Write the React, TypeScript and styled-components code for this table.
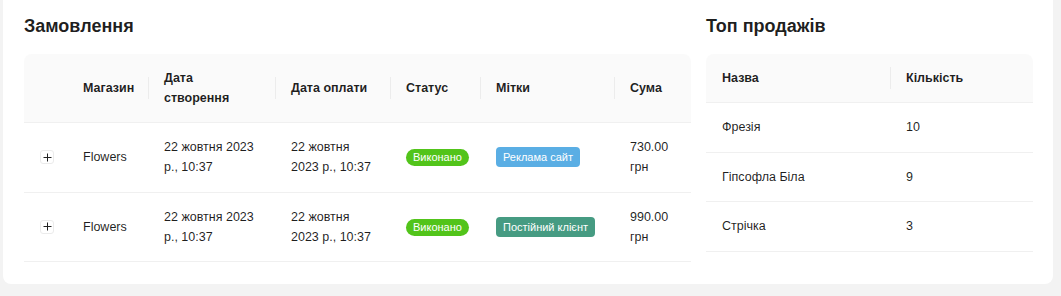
import React, { FC } from "react"
import styled, { createGlobalStyle } from "styled-components"

const GlobalStyle = createGlobalStyle`
  html, body {
    margin: 0;
    padding: 0;
    background: #f3f3f3;
    font-family: "Liberation Sans", Arial, sans-serif;
    color: rgba(0, 0, 0, 0.88);
  }
`

const Page = styled.div`
  padding: 0 8px 13px 3px;
`

const Card = styled.div`
  background: #fff;
  border-radius: 0 0 8px 8px;
  padding: 0 20px 22px 21px;
  display: flex;
  gap: 15px;
  align-items: flex-start;
`

const Section = styled.section<{ width: number }>`
  width: ${ props => props.width }px;
  flex: none;
`

const Title = styled.h2`
  margin: 0;
  padding-top: 14px;
  height: 54px;
  box-sizing: border-box;
  font-size: 18px;
  line-height: 24px;
  font-weight: 700;
  color: rgba(0, 0, 0, 0.88);
`

const Table = styled.table`
  width: 100%;
  border-collapse: separate;
  border-spacing: 0;
  table-layout: fixed;
  font-size: 12.5px;
  line-height: 20px;
`

const Th = styled.th<{ sep?: boolean }>`
  position: relative;
  background: #fafafa;
  text-align: left;
  font-weight: 700;
  padding: 14px 16px;
  border-bottom: 1px solid #f0f0f0;
  color: rgba(0, 0, 0, 0.88);
  &:first-child { border-top-left-radius: 8px; }
  &:last-child { border-top-right-radius: 8px; }
  &::before {
    content: "";
    display: ${ props => props.sep ? "block" : "none" };
    position: absolute;
    left: 0;
    top: 50%;
    width: 1px;
    height: 22px;
    transform: translateY(-50%);
    background: #ececec;
  }
`

const Td = styled.td`
  padding: 14.25px 16px;
  border-bottom: 1px solid #f0f0f0;
  vertical-align: middle;
  color: rgba(0, 0, 0, 0.88);
`

const ExpandTd = styled(Td)`
  padding: 14.25px 0 14.25px 16px;
`

const ExpandButton = styled.button`
  width: 14px;
  height: 14px;
  padding: 0;
  border: 1px solid #ebebeb;
  border-radius: 3px;
  background: #fff;
  display: flex;
  align-items: center;
  justify-content: center;
  cursor: pointer;
`

const Status = styled.span`
  display: inline-block;
  white-space: nowrap;
  background: #52c41a;
  color: #fff;
  font-size: 11px;
  line-height: 17px;
  padding: 0 7px;
  border-radius: 9px;
`

const Tag = styled.span<{ color: string }>`
  display: inline-block;
  white-space: nowrap;
  background: ${ props => props.color };
  color: #fff;
  font-size: 11px;
  line-height: 20px;
  padding: 0 7px;
  border-radius: 4px;
`

type Order = {
  shop: string
  created: string
  paid: string
  status: string
  tag: string
  tagColor: string
  sum: string
}

const orders: Order[] = [
  { shop: "Flowers", created: "22 жовтня 2023 р., 10:37", paid: "22 жовтня 2023 р., 10:37", status: "Виконано", tag: "Реклама сайт", tagColor: "#5aaee4", sum: "730.00 грн" },
  { shop: "Flowers", created: "22 жовтня 2023 р., 10:37", paid: "22 жовтня 2023 р., 10:37", status: "Виконано", tag: "Постійний клієнт", tagColor: "#469b82", sum: "990.00 грн" },
]

const top = [
  { name: "Фрезія", count: 10 },
  { name: "Гіпсофла Біла", count: 9 },
  { name: "Стрічка", count: 3 },
]

const PlusIcon: FC = () => (
  <svg width="9" height="9" viewBox="0 0 9 9">
    <path d="M4.5 0.5v8M0.5 4.5h8" stroke="#222" strokeWidth="1" />
  </svg>
)

const App: FC = () => {
  return (
    <>
      <GlobalStyle />
      <Page>
        <Card>
          <Section width={ 667 }>
            <Title>Замовлення</Title>
            <Table>
              <colgroup>
                <col style={ { width: 43 } } />
                <col style={ { width: 81 } } />
                <col style={ { width: 127 } } />
                <col style={ { width: 115 } } />
                <col style={ { width: 90 } } />
                <col style={ { width: 134 } } />
                <col style={ { width: 77 } } />
              </colgroup>
              <thead>
                <tr>
                  <Th />
                  <Th>Магазин</Th>
                  <Th sep>Дата створення</Th>
                  <Th sep>Дата оплати</Th>
                  <Th sep>Статус</Th>
                  <Th sep>Мітки</Th>
                  <Th sep>Сума</Th>
                </tr>
              </thead>
              <tbody>
                { orders.map((o, i) => (
                  <tr key={ i }>
                    <ExpandTd><ExpandButton aria-label="expand"><PlusIcon /></ExpandButton></ExpandTd>
                    <Td>{ o.shop }</Td>
                    <Td>{ o.created }</Td>
                    <Td>{ o.paid }</Td>
                    <Td><Status>{ o.status }</Status></Td>
                    <Td><Tag color={ o.tagColor }>{ o.tag }</Tag></Td>
                    <Td>{ o.sum }</Td>
                  </tr>
                )) }
              </tbody>
            </Table>
          </Section>
          <Section width={ 327 }>
            <Title>Топ продажів</Title>
            <Table>
              <colgroup>
                <col style={ { width: 184 } } />
                <col style={ { width: 143 } } />
              </colgroup>
              <thead>
                <tr>
                  <Th>Назва</Th>
                  <Th sep>Кількість</Th>
                </tr>
              </thead>
              <tbody>
                { top.map(t => (
                  <tr key={ t.name }>
                    <Td>{ t.name }</Td>
                    <Td>{ t.count }</Td>
                  </tr>
                )) }
              </tbody>
            </Table>
          </Section>
        </Card>
      </Page>
    </>
  )
}
export default App
